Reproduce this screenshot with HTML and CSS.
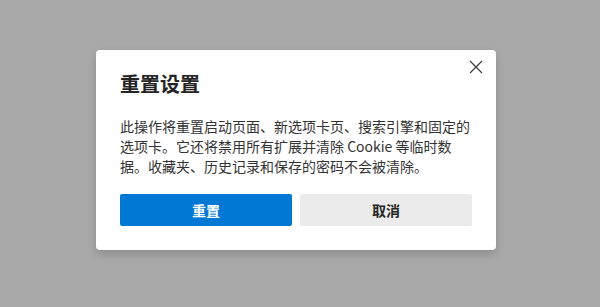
FILE: index.html
```html
<!DOCTYPE html>
<html lang="zh-CN">
<head>
    <meta charset="UTF-8">
    <title>重置设置</title>
    <link rel="stylesheet" href="styles.css">
</head>
<body>
    <div class="overlay">
        <div class="dialog">
            <button class="close" aria-label="关闭">
                <svg width="14" height="14" viewBox="0 0 14 14">
                    <path d="M1 1 L13 13 M13 1 L1 13" stroke="#3b3b3b" stroke-width="1.2" fill="none"/>
                </svg>
            </button>
            <p class="title">重置设置</p>
            <p class="text">此操作将重置启动页面、新选项卡页、搜索引擎和固定的选项卡。它还将禁用所有扩展并清除 Cookie 等临时数据。收藏夹、历史记录和保存的密码不会被清除。</p>
            <div class="actions">
                <button class="btn primary">重置</button>
                <button class="btn secondary">取消</button>
            </div>
        </div>
    </div>
</body>
</html>
```

FILE: styles.css
```css
html, body {
    margin: 0;
    padding: 0;
}
body {
    background-color: #a9a9a9;
    font-family: "Noto Sans CJK SC", "Noto Sans", sans-serif;
}
.overlay {
    width: 600px;
    height: 307px;
    box-sizing: border-box;
    padding: 50px 0 0 96px;
}
.dialog {
    position: relative;
    width: 400px;
    box-sizing: border-box;
    padding: 20px 24px 24px;
    background-color: white;
    border-radius: 4px;
    box-shadow: 0 4px 10px rgba(0, 0, 0, 0.18);
}
.close {
    position: absolute;
    top: 10px;
    right: 13px;
    width: 14px;
    height: 14px;
    padding: 0;
    border: none;
    background: none;
    line-height: 0;
}
.title {
    margin: 0;
    font-size: 20px;
    line-height: 28px;
    font-weight: 700;
    color: #242424;
}
.text {
    margin: 18px 0 0;
    font-size: 14px;
    line-height: 20px;
    color: #333;
}
.actions {
    display: flex;
    gap: 8px;
    margin-top: 18px;
}
.btn {
    flex: 1;
    height: 32px;
    border: none;
    border-radius: 2px;
    font-family: "Noto Sans CJK SC", "Noto Sans", sans-serif;
    font-size: 14px;
    font-weight: 700;
}
.primary {
    background-color: #0078d4;
    color: white;
}
.secondary {
    background-color: #ebebeb;
    color: #242424;
}
```
